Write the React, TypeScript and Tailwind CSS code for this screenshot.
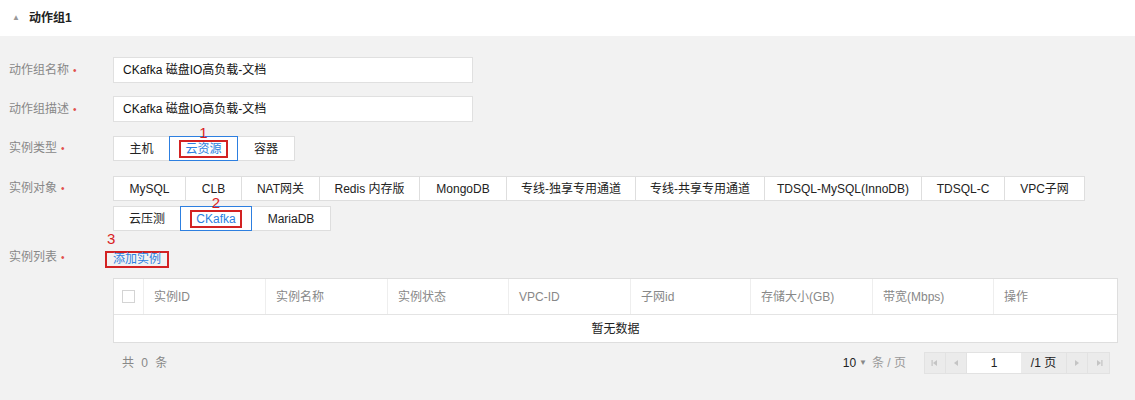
import React from 'react'

const font = { fontFamily: '"Liberation Sans", "Noto Sans CJK SC", sans-serif' }

const types = [
  { label: '主机', w: 'w-[57px]' },
  { label: '云资源', w: 'w-[69px]', active: true, mark: '1' },
  { label: '容器', w: 'w-[57px]' },
]

const objectsRow1 = [
  { label: 'MySQL', w: 'w-[73px]' },
  { label: 'CLB', w: 'w-[56px]' },
  { label: 'NAT网关', w: 'w-[78px]' },
  { label: 'Redis 内存版', w: 'w-[100px]' },
  { label: 'MongoDB', w: 'w-[87px]' },
  { label: '专线-独享专用通道', w: 'w-[129px]' },
  { label: '专线-共享专用通道', w: 'w-[129px]' },
  { label: 'TDSQL-MySQL(InnoDB)', w: 'w-[157px]' },
  { label: 'TDSQL-C', w: 'w-[83px]' },
  { label: 'VPC子网', w: 'w-[80px]' },
]

const objectsRow2 = [
  { label: '云压测', w: 'w-[68px]' },
  { label: 'CKafka', w: 'w-[72px]', active: true, mark: '2' },
  { label: 'MariaDB', w: 'w-[79px]' },
]

const columns = [
  { label: '实例ID', w: 'w-[122px]' },
  { label: '实例名称', w: 'w-[122px]' },
  { label: '实例状态', w: 'w-[121px]' },
  { label: 'VPC-ID', w: 'w-[122px]' },
  { label: '子网id', w: 'w-[120px]' },
  { label: '存储大小(GB)', w: 'w-[122px]' },
  { label: '带宽(Mbps)', w: 'w-[121px]' },
  { label: '操作', w: 'flex-1' },
]

type Opt = { label: string; w: string; active?: boolean; mark?: string }

function Label({ text }: { text: string }) {
  return (
    <div className="w-[104px] shrink-0 text-[12px] text-[#888] leading-[25px]">
      {text}
      <span className="text-[#e1504a] ml-[4px] text-[10px]">•</span>
    </div>
  )
}

function Segment({ items }: { items: Opt[] }) {
  return (
    <div className="flex">
      {items.map((it, i) => (
        <div
          key={it.label}
          className={`${it.w} h-[25px] relative flex items-center justify-center text-[12px] bg-white ${
            it.active
              ? 'border border-[#2d7fe0] text-[#2d7fe0] z-10'
              : 'border-y border-r border-[#dedede] text-[#222]'
          } ${i === 0 && !it.active ? 'border-l' : ''} ${it.active && i > 0 ? '-ml-px' : ''}`}
        >
          {it.mark ? (
            <>
              <span className="absolute left-1/2 -translate-x-1/2 -top-[12px] text-[#d91e1e] text-[15px] leading-none z-20">
                {it.mark}
              </span>
              <span className="border-2 border-[#d32222] px-[4px] leading-[14px]">{it.label}</span>
            </>
          ) : (
            it.label
          )}
        </div>
      ))}
    </div>
  )
}

function Arrow({ dir, bar }: { dir: 'l' | 'r'; bar?: boolean }) {
  return (
    <svg width="8" height="8" viewBox="0 0 8 8" fill="#c4c4c4">
      {dir === 'l' ? <path d="M6 1 L2 4 L6 7 Z" /> : <path d="M2 1 L6 4 L2 7 Z" />}
      {bar && (dir === 'l' ? <rect x="0.5" y="1" width="1.2" height="6" /> : <rect x="6.3" y="1" width="1.2" height="6" />)}
    </svg>
  )
}

function PgBtn({ children, last }: { children: React.ReactNode; last?: boolean }) {
  return (
    <div className={`w-[21px] h-full flex items-center justify-center ${last ? '' : 'border-r border-[#e2e2e2]'}`}>
      {children}
    </div>
  )
}

export default function App() {
  return (
    <div className="w-[1135px] h-[400px] bg-[#f2f2f2] overflow-hidden" style={font}>
      <div className="h-[36px] bg-white flex items-center pl-[12px]">
        <span className="text-[#999] text-[8px] mr-[9px]">▲</span>
        <span className="text-[12px] font-bold text-[#222]">动作组1</span>
      </div>

      <div className="pl-[9px] pt-[21px]">
        <div className="flex items-center">
          <Label text="动作组名称" />
          <div className="w-[360px] h-[26px] bg-white border border-[#e0e0e0] flex items-center px-[9px] text-[12px] text-[#111]">
            CKafka 磁盘IO高负载-文档
          </div>
        </div>

        <div className="flex items-center mt-[13px]">
          <Label text="动作组描述" />
          <div className="w-[360px] h-[26px] bg-white border border-[#e0e0e0] flex items-center px-[9px] text-[12px] text-[#111]">
            CKafka 磁盘IO高负载-文档
          </div>
        </div>

        <div className="flex items-center mt-[14px]">
          <Label text="实例类型" />
          <Segment items={types} />
        </div>

        <div className="flex mt-[15px]">
          <Label text="实例对象" />
          <div className="flex flex-col gap-[5px]">
            <Segment items={objectsRow1} />
            <Segment items={objectsRow2} />
          </div>
        </div>

        <div className="flex items-center mt-[14px]">
          <Label text="实例列表" />
          <div className="relative -ml-[8px]">
            <span className="absolute left-[2px] -top-[15px] text-[#d91e1e] text-[15px] leading-none">3</span>
            <span className="border-2 border-[#d32222] px-[6px] text-[12px] text-[#2d7fe0] leading-[13px] inline-block">
              添加实例
            </span>
          </div>
        </div>

        <div className="ml-[104px] mt-[8px] w-[1005px] bg-white border border-[#dedede]">
          <div className="flex h-[36px] border-b border-[#e4e4e4]">
            <div className="w-[30px] flex items-center justify-center border-r border-[#eee]">
              <div className="w-[13px] h-[13px] border border-[#d4d4d4] bg-white" />
            </div>
            {columns.map((c, i) => (
              <div
                key={c.label}
                className={`${c.w} flex items-center pl-[10px] text-[12px] text-[#888] ${
                  i < columns.length - 1 ? 'border-r border-[#eee]' : ''
                }`}
              >
                {c.label}
              </div>
            ))}
          </div>
          <div className="h-[27px] flex items-center justify-center text-[12px] text-[#222]">暂无数据</div>
        </div>

        <div className="ml-[104px] w-[997px] flex items-center justify-between mt-[9px]">
          <span className="text-[12px] text-[#888] pl-[9px] tracking-[2px]">共 0 条</span>
          <div className="flex items-center">
            <span className="text-[12px] text-[#222]">10</span>
            <span className="text-[#888] text-[8px] ml-[3px]">▼</span>
            <span className="text-[12px] text-[#999] ml-[5px]">条 / 页</span>
            <div className="ml-[18px] h-[22px] flex border border-[#e2e2e2] bg-[#ebebeb]">
              <PgBtn><Arrow dir="l" bar /></PgBtn>
              <PgBtn><Arrow dir="l" /></PgBtn>
              <div className="w-[54px] bg-white flex items-center justify-center text-[12px] text-[#222]">1</div>
              <div className="w-[46px] flex items-center justify-center text-[12px] text-[#222] border-r border-[#e2e2e2]">
                /1 页
              </div>
              <PgBtn><Arrow dir="r" /></PgBtn>
              <PgBtn last><Arrow dir="r" bar /></PgBtn>
            </div>
          </div>
        </div>
      </div>
    </div>
  )
}
